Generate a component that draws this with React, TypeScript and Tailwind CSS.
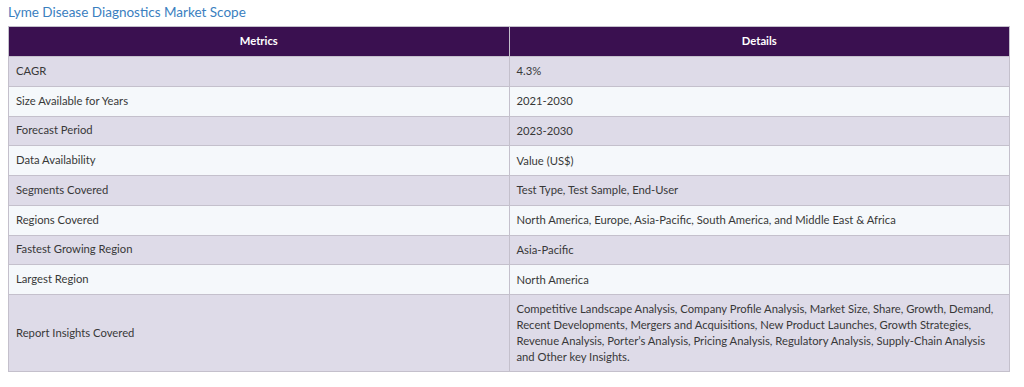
const rows: [string, string][] = [
  ['CAGR', '4.3%'],
  ['Size Available for Years', '2021-2030'],
  ['Forecast Period', '2023-2030'],
  ['Data Availability', 'Value (US$)'],
  ['Segments Covered', 'Test Type, Test Sample, End-User'],
  ['Regions Covered', 'North America, Europe, Asia-Pacific, South America, and Middle East & Africa'],
  ['Fastest Growing Region', 'Asia-Pacific'],
  ['Largest Region', 'North America'],
  [
    'Report Insights Covered',
    'Competitive Landscape Analysis, Company Profile Analysis, Market Size, Share, Growth, Demand, Recent Developments, Mergers and Acquisitions, New Product Launches, Growth Strategies, Revenue Analysis, Porter\u2019s Analysis, Pricing Analysis, Regulatory Analysis, Supply-Chain Analysis and Other key Insights.',
  ],
];

export default function App() {
  return (
    <div className="w-[1024px] h-[387px] bg-white px-2 pt-[2px] font-['Lato',sans-serif]">
      <h2 className="text-[13.5px] leading-[20px] text-[#3a80c0] mb-[4px]">Lyme Disease Diagnostics Market Scope</h2>
      <table className="w-[1002px] border-collapse table-fixed text-[11.25px] text-[#383838]">
        <thead>
          <tr className="h-[30px] bg-[#3a1050] text-white">
            <th className="w-1/2 border border-[#c4c0cc] font-bold text-center">Metrics</th>
            <th className="w-1/2 border border-[#c4c0cc] font-bold text-center">Details</th>
          </tr>
        </thead>
        <tbody>
          {rows.map(([k, v], i) => (
            <tr key={k} className={i % 2 === 0 ? 'bg-[#dedbe8]' : 'bg-[#f5f8fb]'}>
              <td className={`border border-[#c4c0cc] px-[7px] ${i === 8 ? 'h-[77px]' : 'h-[29.75px]'}`}>{k}</td>
              <td className="border border-[#c4c0cc] px-[7px] py-[5px] leading-[16px] pr-[8px]">{v}</td>
            </tr>
          ))}
        </tbody>
      </table>
    </div>
  );
}
